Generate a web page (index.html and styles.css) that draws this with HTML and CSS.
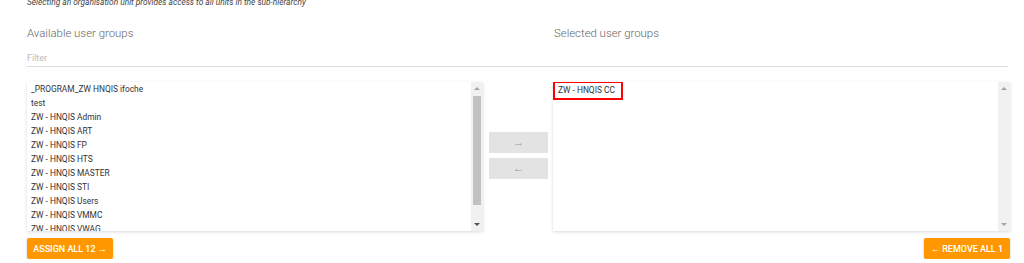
FILE: index.html
```html
<!DOCTYPE html>
<html lang="en">
<head>
    <meta charset="UTF-8">
    <meta name="viewport" content="width=device-width, initial-scale=1.0">
    <title>User groups</title>
    <link rel="stylesheet" href="styles.css">
</head>
<body>

<div class="page">
    <p class="hint">Selecting an organisation unit provides access to all units in the sub-hierarchy</p>

    <div class="headings">
        <h2>Available user groups</h2>
        <h2 class="right-heading">Selected user groups</h2>
    </div>

    <div class="filter">Filter</div>

    <div class="picker">
        <div class="list-box left-box">
            <ul class="items">
                <li>_PROGRAM_ZW HNQIS ifoche</li>
                <li>test</li>
                <li>ZW - HNQIS Admin</li>
                <li>ZW - HNQIS ART</li>
                <li>ZW - HNQIS FP</li>
                <li>ZW - HNQIS HTS</li>
                <li>ZW - HNQIS MASTER</li>
                <li>ZW - HNQIS STI</li>
                <li>ZW - HNQIS Users</li>
                <li>ZW - HNQIS VMMC</li>
                <li>ZW - HNQIS VWAG</li>
            </ul>
            <div class="scrollbar">
                <span class="arrow-up"></span>
                <div class="track"><div class="thumb"></div></div>
                <span class="arrow-down"></span>
            </div>
        </div>

        <div class="moves">
            <button type="button" class="move">&rarr;</button>
            <button type="button" class="move">&larr;</button>
        </div>

        <div class="list-box right-box">
            <ul class="items">
                <li class="marked">ZW - HNQIS CC</li>
            </ul>
            <div class="scrollbar">
                <span class="arrow-up"></span>
                <div class="track"></div>
                <span class="arrow-down"></span>
            </div>
        </div>
    </div>

    <div class="actions">
        <button type="button" class="bulk">ASSIGN ALL 12 &rarr;</button>
        <button type="button" class="bulk">&larr; REMOVE ALL 1</button>
    </div>
</div>

</body>
</html>
```

FILE: styles.css
```css
body {
    font-family: Roboto, 'Liberation Sans', sans-serif;
    background-color: #fff;
    margin: 0;
    padding: 0;
    color: #333;
    overflow: hidden;
}
.page {
    padding: 0 14px 0 27px;
}
.hint {
    font-style: italic;
    font-size: 8.35px;
    color: #444;
    margin: -3px 0 0;
    line-height: 10px;
}
.headings {
    display: flex;
    margin-top: 19px;
}
h2 {
    font-size: 11.4px;
    font-weight: 300;
    color: #666;
    margin: 0;
    line-height: 14px;
    width: 527px;
}
.right-heading {
    width: auto;
}
.filter {
    font-size: 9px;
    color: #bbb;
    margin-top: 13px;
    padding-bottom: 2px;
    line-height: 11px;
    border-bottom: 1px solid #ddd;
    margin-right: 2px;
}
.picker {
    display: flex;
    margin-top: 15px;
}
.list-box {
    display: flex;
    height: 149px;
    background-color: #fff;
    box-shadow: 0 1px 3px rgba(0, 0, 0, 0.15);
    overflow: hidden;
}
.left-box {
    width: 456px;
}
.right-box {
    width: 457px;
}
.items {
    flex: 1;
    list-style: none;
    margin: 0;
    padding: 0;
    font-size: 8.4px;
    color: #333;
}
.items li {
    line-height: 14px;
    padding-left: 4px;
    white-space: nowrap;
}
.items .marked {
    width: 63px;
    line-height: 15px;
    border: 2px solid #f00;
    padding-left: 3px;
    margin-top: -1px;
}
.scrollbar {
    width: 12px;
    background-color: #f1f1f1;
    display: flex;
    flex-direction: column;
    align-items: center;
}
.track {
    flex: 1;
    width: 100%;
    padding-top: 1px;
}
.thumb {
    height: 109px;
    margin: 0 2px;
    background-color: #c1c1c1;
}
.arrow-up, .arrow-down {
    width: 0;
    height: 0;
    border-left: 3px solid transparent;
    border-right: 3px solid transparent;
    margin: 5px 0;
}
.arrow-up {
    border-bottom: 3px solid #a3a3a3;
}
.arrow-down {
    border-top: 3px solid #505050;
}
.right-box .arrow-down {
    border-top-color: #a3a3a3;
}
.moves {
    width: 70px;
    display: flex;
    flex-direction: column;
    align-items: center;
    padding-top: 50px;
    gap: 5px;
}
.move {
    width: 59px;
    height: 21px;
    border: none;
    background-color: #e3e3e3;
    color: #999;
    font-size: 11px;
    line-height: 21px;
    padding: 0;
    margin-left: 1px;
}
.actions {
    display: flex;
    justify-content: space-between;
    margin-top: 7px;
}
.bulk {
    background-color: #ff9800;
    color: #fff;
    font-family: Roboto, 'Liberation Sans', sans-serif;
    font-weight: 500;
    font-size: 9px;
    height: 21px;
    width: 86px;
    padding: 0;
    border: none;
    border-radius: 2px;
    box-shadow: 0 1px 3px rgba(0, 0, 0, 0.2);
}
```
